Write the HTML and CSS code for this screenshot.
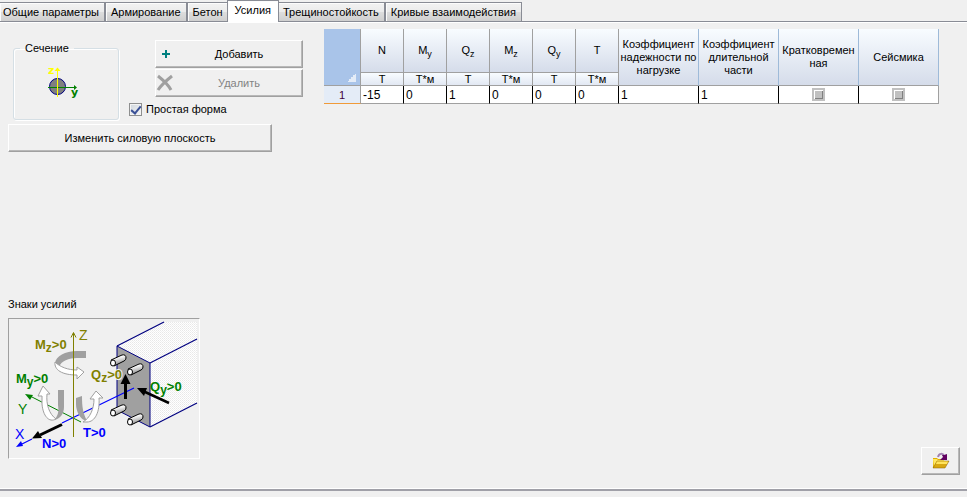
FILE: index.html
```html
<!DOCTYPE html>
<html lang="ru">
<head>
<meta charset="utf-8">
<title>Усилия</title>
<link rel="stylesheet" href="styles.css">
</head>
<body>
<nav class="tabs" role="tablist">
  <button class="tab" role="tab">Общие параметры</button>
  <button class="tab" role="tab">Армирование</button>
  <button class="tab" role="tab">Бетон</button>
  <button class="tab active" role="tab" aria-selected="true">Усилия</button>
  <button class="tab" role="tab">Трещиностойкость</button>
  <button class="tab" role="tab">Кривые взаимодействия</button>
</nav>
<main class="page">
  <section class="side">
    <div class="top">
      <fieldset class="group">
        <legend>Сечение</legend>
        <svg class="section-icon" width="40" height="36" viewBox="44 64 40 36" aria-hidden="true">
          <circle cx="57.500" cy="86.500" r="8" fill="#808080" stroke="#000080"/>
          <path d="M48 87.500H75" stroke="#008000"/>
          <path d="M74 85v5l3-2.500z" fill="#008000"/>
          <path d="M57 69h1v28h-1z" fill="#ff0"/>
          <path d="M57.500 67.500l3 3.500h-6z" fill="#ff0"/>
          <text x="48" y="74" class="axis-name" fill="#ff0">z</text>
          <text x="71" y="96" class="axis-name" fill="#008000">y</text>
        </svg>
      </fieldset>
      <div class="actions">
        <button class="btn">
          <svg width="20" height="20" viewBox="0 0 20 20" aria-hidden="true"><path d="M6 10h8M10 6v8" stroke="#008080" stroke-width="2"/></svg>
          <span>Добавить</span>
        </button>
        <button class="btn" disabled>
          <svg width="20" height="20" viewBox="0 0 20 20" aria-hidden="true"><path d="M2 3C7 7 12 11 15 17M16 3C11 7 6 11 2 17" stroke="#a0a0a0" stroke-width="3" fill="none"/></svg>
          <span>Удалить</span>
        </button>
      </div>
    </div>
    <label class="simple"><input type="checkbox" checked><span>Простая форма</span></label>
    <button class="btn plane"><span>Изменить силовую плоскость</span></button>
    <div class="signs">
      <h2>Знаки усилий</h2>
      <figure>
        <svg width="190" height="139" viewBox="9 319 190 139" role="img" aria-label="Знаки усилий">
          <defs>
            <pattern id="hatch" width="2" height="2" patternUnits="userSpaceOnUse"><rect width="2" height="2" fill="#fff"/><rect width="1" height="1" fill="#e8e8e8"/><rect x="1" y="1" width="1" height="1" fill="#f0f0f0"/></pattern>
            <linearGradient id="bar" x1="0" y1="0" x2="0.300" y2="1"><stop offset="0.300" stop-color="#fff"/><stop offset="1" stop-color="#888"/></linearGradient>
            <g id="rebar"><path d="M-2-3L9-8Q13-9 13-5Q13-3 11-2L1 3z" fill="url(#bar)" stroke="#000"/><ellipse cx="0" cy="0" rx="2.500" ry="3" fill="#fff" stroke="#000"/></g>
          </defs>
          <path d="M117 346L164 322H197V403L150 427V363z" fill="url(#hatch)"/>
          <path d="M117 346L150 363V427L117 410z" fill="#a0a0a0" stroke="#000080"/>
          <path d="M117 346L164 322M150 363L197 339M150 427L197 403" stroke="#000080" fill="none" stroke-width="1.200"/>
          <use href="#rebar" x="113" y="363"/><use href="#rebar" x="130" y="372"/>
          <use href="#rebar" x="113" y="413"/><use href="#rebar" x="130" y="422"/>
          <path d="M30 396L81 422" stroke="#008000"/>
          <path d="M25 394l8 1-3 5z" fill="#008000"/>
          <path d="M134 388L62 423M32 439L22 444" stroke="#00f" stroke-width="1.200"/>
          <path d="M16 447l5-6 2 5z" fill="#00f"/>
          <path d="M86 351H77C65 351 56 356 55 363L59 367C61 361 69 358 77 358H86z" fill="#a0a0a0"/>
          <path d="M55 362C54 370 62 375 77 375V379L84 372 77 367V370C68 370 60 367 55 362z" fill="#fff" stroke="#a0a0a0"/>
          <path d="M73 333h1v104h-1z" fill="#808000"/>
          <path d="M71 337.500l2.500-5 2.500 5" stroke="#808000" fill="none"/>
          <path d="M58 390H64V407C64 414 60 419 54 420C58 416 59 412 58 405z" fill="#a0a0a0"/>
          <path d="M43 386L50 394H47C46 404 49 414 56 419C49 423 43 416 42 404V396H38z" fill="#fff" stroke="#a0a0a0"/>
          <path d="M76 398L82 396C82 407 83 413 87 421C80 420 76 411 76 404z" fill="#a0a0a0"/>
          <path d="M96 391L103 398 99 398C100 412 95 422 87 422H83C90 418 94 409 94 399L90 399z" fill="#fff" stroke="#a0a0a0"/>
          <path d="M62 424.500L40 435" stroke="#000" stroke-width="3"/>
          <path d="M32 438.500L38 431l4 7z"/>
          <path d="M125.500 399V382" stroke="#000" stroke-width="3"/>
          <path d="M125.500 374l5 10h-10z"/>
          <path d="M169 403L144 391.500" stroke="#000" stroke-width="2.500"/>
          <path d="M137 388l10 0-3 8z"/>
          <g class="thin">
            <text x="79" y="340" fill="#808000">Z</text>
            <text x="18" y="414" fill="#008000">Y</text>
            <text x="15" y="439" fill="#00f">X</text>
          </g>
          <g class="force">
            <text x="35" y="349" fill="#808000">M<tspan class="low" dy="3">z</tspan><tspan dy="-3">&gt;0</tspan></text>
            <text x="16" y="383" fill="#008000">M<tspan class="low" dy="3">y</tspan><tspan dy="-3">&gt;0</tspan></text>
            <text class="halo" x="91" y="379" fill="#808000">Q<tspan class="low" dy="3">z</tspan><tspan dy="-3">&gt;0</tspan></text>
            <text x="150" y="391" fill="#008000">Q<tspan class="low" dy="3">y</tspan><tspan dy="-3">&gt;0</tspan></text>
            <text x="42" y="448" fill="#00f">N&gt;0</text>
            <text x="83" y="437" fill="#00f">T&gt;0</text>
          </g>
        </svg>
      </figure>
    </div>
  </section>
  <table class="grid">
    <colgroup><col class="c-no"><col class="c-force" span="6"><col class="c-wide" span="4"></colgroup>
    <thead>
      <tr class="names">
        <th class="corner" rowspan="2"></th>
        <th>N</th><th>M<sub>y</sub></th><th>Q<sub>z</sub></th><th>M<sub>z</sub></th><th>Q<sub>y</sub></th><th>T</th>
        <th class="wide" rowspan="2">Коэффициент<br>надежности по<br>нагрузке</th>
        <th class="wide" rowspan="2">Коэффициент<br>длительной<br>части</th>
        <th class="wide" rowspan="2">Кратковремен<br>ная</th>
        <th class="wide" rowspan="2">Сейсмика</th>
      </tr>
      <tr class="units"><th>Т</th><th>Т*м</th><th>Т</th><th>Т*м</th><th>Т</th><th>Т*м</th></tr>
    </thead>
    <tbody>
      <tr>
        <th class="row-no">1</th>
        <td>-15</td><td>0</td><td>1</td><td>0</td><td>0</td><td>0</td><td>1</td><td>1</td>
        <td class="tick"><input type="checkbox" aria-label="Кратковременная"></td>
        <td class="tick"><input type="checkbox" aria-label="Сейсмика"></td>
      </tr>
    </tbody>
  </table>
  <button class="btn open" aria-label="Открыть">
    <svg width="18" height="18" viewBox="0 0 18 18" aria-hidden="true">
      <path d="M1 16V6h4l1 1h6v3H6L2 16z" fill="#e0b000"/>
      <path d="M1 7h4l1 1h6v3H6L2 15z" fill="#ffe860"/>
      <path d="M1 16L5 9H17L13 16z" fill="#d8a810" stroke="#8a6000" stroke-width=".5"/>
      <path d="M5 9.500H16L15 12H4z" fill="#ffe45c"/>
      <path d="M6 5C7 1 11 1 12 4" fill="none" stroke="#a080b0" stroke-width="2"/>
      <path d="M15 2V8H8L11 5 10 3 12 3z" fill="#600060"/>
    </svg>
  </button>
</main>
<footer class="status"></footer>
</body>
</html>
```

FILE: styles.css
```css
* { box-sizing: border-box; }
body {
  margin: 0;
  min-height: 100vh;
  display: flex;
  flex-direction: column;
  background: #f0f0f0;
  color: #000;
  font: 11px/14px "Liberation Sans", Arial, sans-serif;
}
button, input { font: inherit; color: inherit; margin: 0; }
.tabs {
  display: flex;
  align-items: flex-end;
  height: 22px;
  border-bottom: 1px solid #898c95;
}
.tab {
  height: 19px;
  padding: 0 5px;
  border: 1px solid #898c95;
  border-bottom: 0;
  background: linear-gradient(#f2f2f2, #ebebeb 48%, #dddddd 52%, #cfcfcf);
  box-shadow: inset 1px 1px #fcfcfc;
  white-space: nowrap;
}
.tab:first-child { padding-left: 3px; border-left: 0; }
.tab.active {
  height: 22px;
  margin: 0 -2px -1px;
  padding: 0 7px 3px;
  position: relative;
  background: #fff;
}
.page {
  flex: 1;
  display: grid;
  grid-template-columns: 295px 1fr auto;
  column-gap: 21px;
  padding: 6px 7px 13px 8px;
  border-top: 1px solid #fff;
  border-bottom: 1px solid #fff;
}
.side { display: flex; flex-direction: column; align-items: flex-start; }
.top { display: flex; width: 100%; height: 73px; padding: 11px 0 0 5px; gap: 36px; }
.group {
  align-self: flex-start;
  width: 106px;
  height: 79px;
  margin: 1px 0 0;
  padding: 0 0 0 30px;
  border: 1px solid #d5dfe5;
  border-radius: 3px;
  box-shadow: inset 1px 1px #fff, 1px 1px #fff;
}
.group legend { margin-left: -24px; padding: 0 5px; }
.section-icon { display: block; margin-top: 9px; }
.axis-name { font: bold 11px "DejaVu Sans", sans-serif; }
.actions { flex: 1; display: flex; flex-direction: column; gap: 1px; }
.btn {
  height: 28px;
  display: flex;
  align-items: center;
  justify-content: center;
  padding: 0;
  border: 1px solid;
  border-color: #fff #a0a0a0 #a0a0a0 #fff;
  box-shadow: inset -1px -1px #b8b8b8;
  background: #f0f0f0;
}
.actions .btn span { flex: 1; }
.btn:disabled { color: #838383; }
.simple { display: flex; align-items: center; gap: 4px; height: 14px; margin-left: 121px; }
.simple input {
  appearance: none;
  width: 13px;
  height: 13px;
  border: 1px solid #8e8f8f;
  background: linear-gradient(135deg, #cfd6dd, #f6f6f6);
  box-shadow: inset 0 0 0 1px #f4f4f4;
  display: grid;
  place-items: center;
}
.simple input::before {
  content: "";
  width: 4px;
  height: 8px;
  border: solid #3a5096;
  border-width: 0 2px 2px 0;
  transform: rotate(40deg);
}
.plane { width: 264px; margin-top: 8px; }
.signs { margin-top: auto; padding-bottom: 16px; }
.signs h2 { margin: 0 0 7px; font: inherit; }
.signs figure {
  margin: 0;
  border: 1px solid;
  border-color: #a0a0a0 #fff #fff #a0a0a0;
}
.signs svg { display: block; }
.thin { font: 14px "Liberation Sans", sans-serif; }
.force { font: bold 13px "Liberation Sans", sans-serif; }
.low { font-size: 12px; }
.halo { paint-order: stroke; stroke: #f0f0f0; stroke-width: 2px; }
.grid {
  align-self: start;
  justify-self: start;
  width: 615px;
  margin-right: -40px;
  table-layout: fixed;
  border-collapse: separate;
  border-spacing: 0;
}
.c-no { width: 37px; }
.c-force { width: 43px; }
.c-wide { width: 80px; }
.grid th, .grid td {
  padding: 0;
  font-weight: normal;
  white-space: nowrap;
  overflow: hidden;
  border: solid #a0a0a0;
  border-width: 0 1px 1px 0;
}
.grid thead th { background: linear-gradient(#f8fcff, #d5dcea); line-height: 13px; }
.grid .names th { height: 44px; }
.grid .units th { height: 13px; line-height: 12px; background: linear-gradient(#f8fcff, #e2e8f3); }
.grid sub { font-size: 9px; line-height: 0; }
.grid thead .wide { border-right-color: #9ebad8; }
.grid thead .corner {
  background: linear-gradient(135deg, transparent 50%, #e4ecf7 50%) right 4px bottom 3px / 9px 9px no-repeat, #a9c4e9;
}
.grid tbody th { height: 18px; background: #e4ecf7; border-bottom-color: #f09a38; color: #400040; }
.grid td { background: #fff; padding-left: 2px; border-right-color: #000; font-size: 12px; }
.grid td:last-child { border-right-color: #a0a0a0; }
.grid .tick { padding: 0; text-align: center; }
.tick input {
  appearance: none;
  display: block;
  width: 13px;
  height: 13px;
  margin: 0 auto;
  border: 2px solid #c0c0c0;
  background: #c0c0c0;
  box-shadow: inset 1px 1px #fff, inset -1px -1px #808080;
}
.open { width: 39px; align-self: end; }
.status { height: 8px; border-top: 2px solid #a0a0a8; }
```
